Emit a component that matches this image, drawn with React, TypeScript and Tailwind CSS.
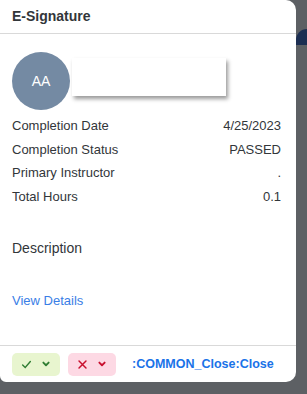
import React from 'react';

const ROWS = [
    { label: 'Completion Date', value: '4/25/2023' },
    { label: 'Completion Status', value: 'PASSED' },
    { label: 'Primary Instructor', value: '.' },
    { label: 'Total Hours', value: '0.1' },
];

const Check = ({ className }: { className?: string }) => (
    <svg viewBox="0 0 12 12" className={className} fill="none" stroke="currentColor" strokeWidth="1.5" strokeLinecap="round">
        <path d="M1.8 6.5 L4.6 9.2 L10.2 2.8" />
    </svg>
);

const Cross = ({ className }: { className?: string }) => (
    <svg viewBox="0 0 12 12" className={className} fill="none" stroke="currentColor" strokeWidth="1.6" strokeLinecap="round">
        <path d="M2.2 2.2 L9.8 9.8 M9.8 2.2 L2.2 9.8" />
    </svg>
);

const Chevron = ({ className }: { className?: string }) => (
    <svg viewBox="0 0 12 12" className={className} fill="none" stroke="currentColor" strokeWidth="2.2" strokeLinecap="round" strokeLinejoin="round">
        <path d="M2.8 4.3 L6 7.5 L9.2 4.3" />
    </svg>
);

export default function App() {
    return (
        <div className="relative w-[307px] h-[394px] overflow-hidden bg-[#5d6064] font-['Liberation_Sans',Arial,sans-serif] text-[#32363a]">
            <div className="absolute right-0 top-[29px] w-[11px] h-[16px] bg-[#1c2e52] rounded-tl-full" />
            <div className="relative w-[296px] h-[382px] bg-white rounded-r-[10px] rounded-bl-[6px] flex flex-col">
                <header className="h-[34px] px-3 flex items-center border-b border-[#d9d9d9]">
                    <h2 className="text-[14px] font-bold">E-Signature</h2>
                </header>

                <div className="flex-1 px-3 pt-[18px] pr-[15px]">
                    <div className="flex items-start">
                        <div className="w-[58px] h-[58px] rounded-full bg-[#748aa3] text-white text-[14px] flex items-center justify-center">
                            AA
                        </div>
                        <div className="ml-[2px] mt-[6px] w-[154px] h-[38px] bg-white shadow-[2px_3px_4px_rgba(0,0,0,0.4)]" />
                    </div>

                    <div className="mt-[4px] flex flex-col">
                        {ROWS.map((row) => (
                            <div key={row.label} className="h-[23.5px] flex items-center justify-between text-[13px]">
                                <span>{row.label}</span>
                                <span>{row.value}</span>
                            </div>
                        ))}
                    </div>

                    <p className="mt-[30px] text-[14px]">Description</p>
                    <a className="block mt-[32px] text-[13px] text-[#3a7ee6]">View Details</a>
                </div>

                <footer className="h-[37px] border-t border-[#d9d9d9] px-3 flex items-center gap-2">
                    <button className="w-[48px] h-[23px] rounded-[5px] bg-[#e8f5cf] text-[#2f7d32] flex items-center justify-center gap-[9px]">
                        <Check className="w-[11px] h-[11px]" />
                        <Chevron className="w-[10px] h-[10px]" />
                    </button>
                    <button className="w-[48px] h-[23px] rounded-[5px] bg-[#fdd9e4] text-[#c8102e] flex items-center justify-center gap-[9px]">
                        <Cross className="w-[11px] h-[11px]" />
                        <Chevron className="w-[10px] h-[10px]" />
                    </button>
                    <button className="ml-[8px] text-[12.5px] font-bold text-[#1a73e8]">:COMMON_Close:Close</button>
                </footer>
            </div>
        </div>
    );
}
